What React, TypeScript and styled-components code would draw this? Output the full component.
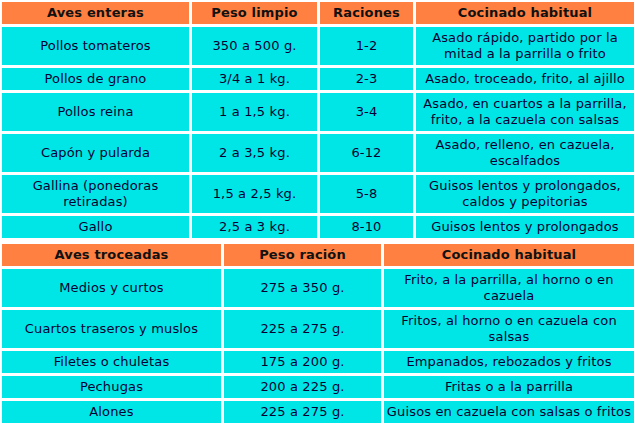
import React from 'react';
import styled, {createGlobalStyle} from "styled-components";

type Row = { cells: React.ReactNode[]; tall?: boolean };

const wholeBirds: Row[] = [
    {cells: ["Pollos tomateros", "350 a 500 g.", "1-2", <>Asado rápido, partido por la<br/>mitad a la parrilla o frito</>], tall: true},
    {cells: ["Pollos de grano", "3/4 a 1 kg.", "2-3", "Asado, troceado, frito, al ajillo"]},
    {cells: ["Pollos reina", "1 a 1,5 kg.", "3-4", <>Asado, en cuartos a la parrilla,<br/>frito, a la cazuela con salsas</>], tall: true},
    {cells: ["Capón y pularda", "2 a 3,5 kg.", "6-12", <>Asado, relleno, en cazuela,<br/>escalfados</>], tall: true},
    {cells: [<>Gallina (ponedoras<br/>retiradas)</>, "1,5 a 2,5 kg.", "5-8", <>Guisos lentos y prolongados,<br/>caldos y pepitorias</>], tall: true},
    {cells: ["Gallo", "2,5 a 3 kg.", "8-10", "Guisos lentos y prolongados"]},
];

const pieces: Row[] = [
    {cells: ["Medios y curtos", "275 a 350 g.", <>Frito, a la parrilla, al horno o en<br/>cazuela</>], tall: true},
    {cells: ["Cuartos traseros y muslos", "225 a 275 g.", <>Fritos, al horno o en cazuela con<br/>salsas</>], tall: true},
    {cells: ["Filetes o chuletas", "175 a 200 g.", "Empanados, rebozados y fritos"]},
    {cells: ["Pechugas", "200 a 225 g.", "Fritas o a la parrilla"]},
    {cells: ["Alones", "225 a 275 g.", "Guisos en cazuela con salsas o fritos"]},
];

const PoultryTable = ({heads, widths, rows}: { heads: string[]; widths: number[]; rows: Row[] }) => (
    <Table>
        <colgroup>
            {widths.map((w, i) => <col key={i} style={{width: w}}/>)}
        </colgroup>
        <thead>
        <tr>
            {heads.map(h => <HeadCell key={h}>{h}</HeadCell>)}
        </tr>
        </thead>
        <tbody>
        {rows.map((r, i) => (
            <tr key={i}>
                {r.cells.map((c, j) => <Cell key={j} $tall={r.tall}>{c}</Cell>)}
            </tr>
        ))}
        </tbody>
    </Table>
);

export default function App() {
    return (
        <>
            <GlobalStyle/>
            <Page>
                <PoultryTable
                    heads={["Aves enteras", "Peso limpio", "Raciones", "Cocinado habitual"]}
                    widths={[187, 125, 93, 218]}
                    rows={wholeBirds}
                />
                <PoultryTable
                    heads={["Aves troceadas", "Peso ración", "Cocinado habitual"]}
                    widths={[219, 157, 250]}
                    rows={pieces}
                />
            </Page>
        </>
    );
}

const GlobalStyle = createGlobalStyle`
    body {
        margin: 0;
        background: #ffffff;
        font-family: "DejaVu Sans", Verdana, sans-serif;
    }
`

const Page = styled.div`
    display: flex;
    flex-direction: column;
    padding: 2px 2px 0 2px;
`

const Table = styled.table`
    table-layout: fixed;
    border-collapse: separate;
    border-spacing: 3px;
    margin: 0 -3px;
    width: 638px;
    font-size: 13px;
    letter-spacing: 0.15px;
    color: #000033;

    &:first-child {
        margin-top: -3px;
    }
`

const HeadCell = styled.th`
    background: #ff8040;
    color: #111111;
    font-size: 13px;
    font-weight: bold;
    height: 22px;
    padding: 0;
    line-height: 16px;
    text-align: center;
    white-space: nowrap;
`

const Cell = styled.td<{ $tall?: boolean }>`
    background: #00e6e6;
    height: ${p => (p.$tall ? "38px" : "22px")};
    padding: 0;
    line-height: 16px;
    text-align: center;
    vertical-align: middle;
    white-space: nowrap;
    overflow: hidden;
`
